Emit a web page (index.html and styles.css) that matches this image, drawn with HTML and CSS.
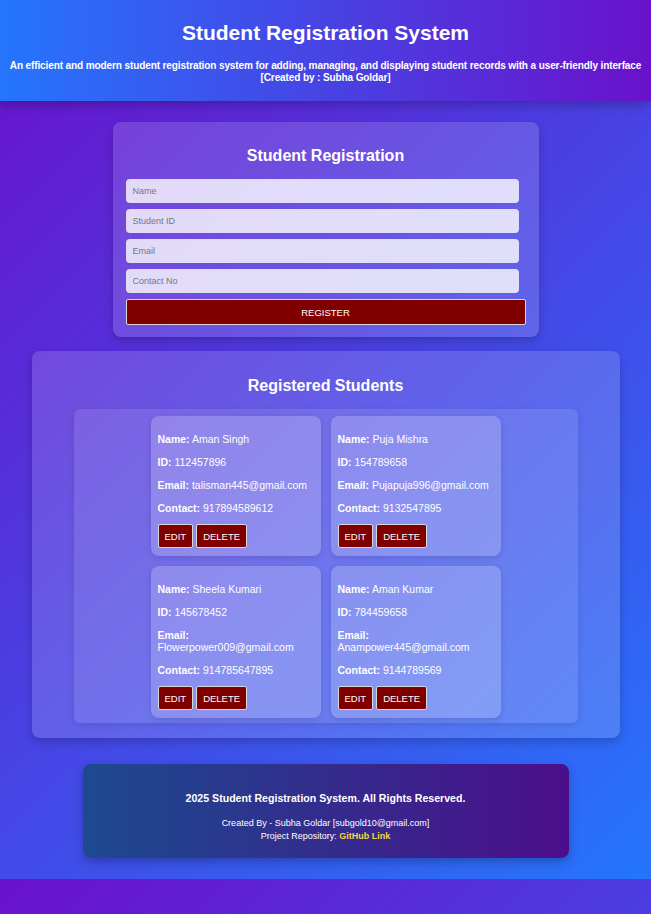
FILE: index.html
```html
<!DOCTYPE html>
<html lang="en">
<head>
<meta charset="UTF-8">
<title>Student Registration System</title>
<link rel="stylesheet" href="styles.css">
</head>
<body>
<header class="site-header">
  <h1 class="site-title">Student Registration System</h1>
  <p class="site-sub">An efficient and modern student registration system for adding, managing, and displaying student records with a user-friendly interface<br>[Created by : Subha Goldar]</p>
</header>

<section class="form-card">
  <h2 class="card-title">Student Registration</h2>
  <form class="reg-form">
    <input class="field" type="text" placeholder="Name">
    <input class="field" type="text" placeholder="Student ID">
    <input class="field" type="text" placeholder="Email">
    <input class="field" type="text" placeholder="Contact No">
    <button class="btn btn-register" type="button">REGISTER</button>
  </form>
</section>

<section class="list-card">
  <h2 class="card-title">Registered Students</h2>
  <div class="student-grid">
    <div class="student">
      <p><b>Name:</b> Aman Singh</p>
      <p><b>ID:</b> 112457896</p>
      <p><b>Email:</b> talisman445@gmail.com</p>
      <p><b>Contact:</b> 917894589612</p>
      <div class="actions"><button class="btn btn-small">EDIT</button><button class="btn btn-small">DELETE</button></div>
    </div>
    <div class="student">
      <p><b>Name:</b> Puja Mishra</p>
      <p><b>ID:</b> 154789658</p>
      <p><b>Email:</b> Pujapuja996@gmail.com</p>
      <p><b>Contact:</b> 9132547895</p>
      <div class="actions"><button class="btn btn-small">EDIT</button><button class="btn btn-small">DELETE</button></div>
    </div>
    <div class="student">
      <p><b>Name:</b> Sheela Kumari</p>
      <p><b>ID:</b> 145678452</p>
      <p><b>Email:</b> Flowerpower009@gmail.com</p>
      <p><b>Contact:</b> 914785647895</p>
      <div class="actions"><button class="btn btn-small">EDIT</button><button class="btn btn-small">DELETE</button></div>
    </div>
    <div class="student">
      <p><b>Name:</b> Aman Kumar</p>
      <p><b>ID:</b> 784459658</p>
      <p><b>Email:</b> Anampower445@gmail.com</p>
      <p><b>Contact:</b> 9144789569</p>
      <div class="actions"><button class="btn btn-small">EDIT</button><button class="btn btn-small">DELETE</button></div>
    </div>
  </div>
</section>

<footer class="site-footer">
  <p class="foot-main">2025 Student Registration System. All Rights Reserved.</p>
  <p class="foot-sub">Created By - Subha Goldar [subgold10@gmail.com]<br>Project Repository: <a class="foot-link" href="#">GitHub Link</a></p>
</footer>
</body>
</html>
```

FILE: styles.css
```css
* { box-sizing: border-box; }

body {
  margin: 0;
  padding: 0 0 21px;
  font-family: "Liberation Sans", Arial, sans-serif;
  color: #fff;
  background: linear-gradient(135deg, #6a11cb, #2575fc);
}

.site-header {
  background: linear-gradient(to right, #2575fc, #6a11cb);
  text-align: center;
  padding: 21px 0 17px;
  box-shadow: 0 4px 10px rgba(0, 0, 0, 0.25);
}

.site-title {
  margin: 0;
  font-size: 21px;
  line-height: 24px;
  font-weight: bold;
}

.site-sub {
  margin: 15px 0 0;
  font-size: 10.1px;
  line-height: 12px;
  font-weight: bold;
  letter-spacing: -0.15px;
}

.form-card {
  width: 426px;
  margin: 21px auto 0;
  padding: 13px 13px 12px;
  background: rgba(255, 255, 255, 0.15);
  border-radius: 8px;
  box-shadow: 0 4px 10px rgba(0, 0, 0, 0.2);
}

.card-title {
  margin: 12px 0 14px;
  font-size: 16px;
  line-height: 18px;
  text-align: center;
  font-weight: bold;
}

.reg-form {
  display: flex;
  flex-direction: column;
  gap: 6px;
}

.field {
  width: 98.3%;
  height: 24px;
  border: none;
  border-radius: 4px;
  padding: 0 7px;
  background: rgba(255, 255, 255, 0.8);
  font-family: "Liberation Sans", Arial, sans-serif;
  font-size: 9px;
  color: #333;
}

.field::placeholder { color: #777; }

.btn {
  background: #800000;
  color: #fff;
  border: 1px solid #d8d8d8;
  font-family: "Liberation Sans", Arial, sans-serif;
  font-size: 9.5px;
  cursor: pointer;
}

.btn-register {
  width: 100%;
  height: 26px;
  border-radius: 2px;
}

.list-card {
  width: 588px;
  margin: 14px auto 0;
  padding: 14px 14px 15px;
  background: rgba(255, 255, 255, 0.15);
  border-radius: 8px;
  box-shadow: 0 4px 10px rgba(0, 0, 0, 0.2);
}

.student-grid {
  width: 90%;
  margin: 0 auto;
  padding: 7px 0 5px;
  display: flex;
  flex-wrap: wrap;
  justify-content: center;
  gap: 10px;
  background: rgba(255, 255, 255, 0.1);
  border-radius: 6px;
  box-shadow: 0 2px 6px rgba(0, 0, 0, 0.1);
}

.student {
  width: 170px;
  padding: 7px 7px 8px;
  background: rgba(255, 255, 255, 0.2);
  border-radius: 8px;
  box-shadow: 0 2px 6px rgba(0, 0, 0, 0.12);
  font-size: 10.5px;
  line-height: 12px;
}

.student p {
  margin: 11px 0;
}

.student p:first-child { margin-top: 10px; }
.student p:last-of-type { margin-bottom: 10px; }

.actions {
  display: flex;
  gap: 3px;
}

.btn-small {
  height: 24px;
  padding: 0 6px;
  border-radius: 2px;
}

.site-footer {
  width: 486px;
  margin: 26px auto 0;
  padding: 28px 10px 15px;
  text-align: center;
  background: linear-gradient(to right, #1c4a8f, #4b0e8a);
  border-radius: 8px;
  box-shadow: 0 4px 10px rgba(0, 0, 0, 0.25);
}

.foot-main {
  margin: 0;
  font-size: 10.6px;
  line-height: 13px;
  font-weight: bold;
}

.foot-sub {
  margin: 12px 0 0;
  font-size: 9px;
  line-height: 13px;
}

.foot-link {
  color: #f5d547;
  font-weight: bold;
  text-decoration: none;
}
```
